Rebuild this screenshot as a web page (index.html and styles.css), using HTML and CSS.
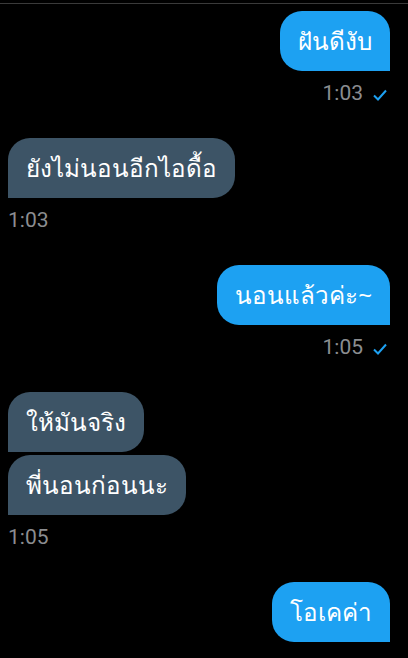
FILE: index.html
```html
<!DOCTYPE html>
<html lang="th">
<head>
  <meta charset="UTF-8" />
  <meta name="viewport" content="width=device-width, initial-scale=1.0"/>
  <title>Chat</title>
  <link rel="stylesheet" href="styles.css">
</head>
<body>
  <div class="topline"></div>
  <div class="chat">
    <div class="group sent">
      <div class="bubble">ฝันดีงับ</div>
      <div class="time">1:03 <svg class="tick" width="14" height="12" viewBox="0 0 14 12"><polyline points="1,6.5 5,10.5 13,1.5" fill="none" stroke="#1da1f2" stroke-width="2"/></svg></div>
    </div>

    <div class="group received">
      <div class="bubble">ยังไม่นอนอีกไอดื้อ</div>
      <div class="time">1:03</div>
    </div>

    <div class="group sent">
      <div class="bubble">นอนแล้วค่ะ~</div>
      <div class="time">1:05 <svg class="tick" width="14" height="12" viewBox="0 0 14 12"><polyline points="1,6.5 5,10.5 13,1.5" fill="none" stroke="#1da1f2" stroke-width="2"/></svg></div>
    </div>

    <div class="group received">
      <div class="bubble">ให้มันจริง</div>
      <div class="bubble">พี่นอนก่อนนะ</div>
      <div class="time">1:05</div>
    </div>

    <div class="group sent">
      <div class="bubble">โอเคค่า</div>
    </div>
  </div>
</body>
</html>
```

FILE: styles.css
```css
body {
  margin: 0;
  background-color: #000;
  font-family: "Noto Sans", Roboto, sans-serif;
  overflow: hidden;
}

.topline {
  height: 1px;
  margin-top: 3px;
  background-color: #3a3a3a;
}

.chat {
  padding-top: 7px;
}

.group {
  display: flex;
  flex-direction: column;
  gap: 3px;
  margin-bottom: 34px;
}

.sent {
  align-items: flex-end;
  padding-right: 18px;
}

.received {
  align-items: flex-start;
  padding-left: 8px;
}

.bubble {
  font-size: 24.2px;
  line-height: 32px;
  padding: 14px 18px 14px 18px;
  color: #fff;
  border-radius: 22px;
}

.sent .bubble {
  background-color: #1da1f2;
  border-bottom-right-radius: 0;
}

.received .bubble {
  background-color: #3d5466;
  border-bottom-left-radius: 0;
}

.time {
  display: flex;
  align-items: center;
  gap: 10px;
  margin-top: 8px;
  font-family: Roboto, sans-serif;
  font-size: 21px;
  line-height: 22px;
  color: #8b8d90;
}

.sent .time {
  padding-right: 3px;
}

.tick {
  margin-top: 3px;
}
```
